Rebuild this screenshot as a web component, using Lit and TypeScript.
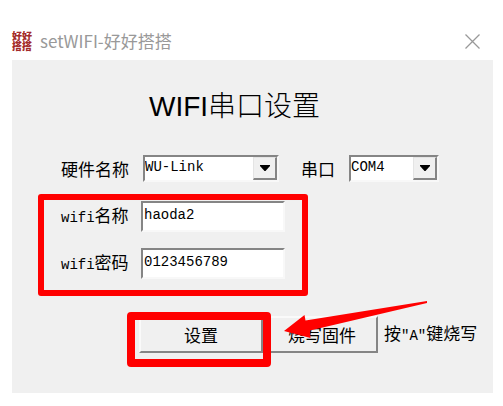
import { LitElement, html, css } from "lit";
import { customElement, property } from "lit/decorators.js";

@customElement("classic-select")
class ClassicSelect extends LitElement {
  @property({ type: Array }) options: string[] = [];
  @property() label = "";

  static styles = css`
    :host { display: block; }
    .box {
      position: relative;
      box-sizing: border-box;
      height: 27px;
      background: #fff;
      border: 2px solid;
      border-color: #858585 #f8f8f8 #f8f8f8 #858585;
    }
    .select {
      appearance: none;
      display: block;
      width: 100%;
      height: 20px;
      margin: 0;
      padding: 0 24px 0 0;
      border: 0;
      border-radius: 0;
      outline: 0;
      background: transparent;
      color: #000;
      font: 14px/20px "Liberation Mono", "Noto Sans CJK SC", monospace;
    }
    .drop {
      position: absolute;
      top: 0;
      right: 0;
      bottom: 0;
      width: 24px;
      box-sizing: border-box;
      display: grid;
      place-items: center;
      background: #f0f0f0;
      border: 1px solid #e4e4e4;
      border-right: 2px solid #858585;
      border-bottom: 2px solid #858585;
      pointer-events: none;
    }
    .tri { display: block; width: 10px; height: 6px; }
  `;

  render() {
    return html`<div class="box">
      <select class="select" aria-label=${this.label}>
        ${this.options.map((o) => html`<option>${o}</option>`)}
      </select>
      <span class="drop">
        <svg class="tri" viewBox="0 0 10 6"><path d="M0 0H10V1L5.500 6H4.500L0 1Z" /></svg>
      </span>
    </div>`;
  }
}

@customElement("app-root")
class AppRoot extends LitElement {
  static styles = css`
    :host {
      display: block;
      background: #fff;
      color: #000;
      font: 17px/20px "Noto Sans CJK SC", sans-serif;
      padding: 22px 10px 13px 12px;
    }
    .titlebar {
      display: flex;
      align-items: center;
      height: 38px;
      gap: 8px;
      color: #999;
    }
    .logo {
      width: 20px;
      word-break: break-all;
      font-size: 10px;
      line-height: 10px;
      font-weight: 900;
      color: #a32a2a;
    }
    .caption { flex: 1; font-family: "Noto Sans CJK SC", sans-serif; }
    .close {
      display: grid;
      place-items: center;
      width: 23px;
      height: 23px;
      margin-right: 9px;
      padding: 0;
      border: 0;
      background: none;
    }
    .cross { display: block; width: 15px; height: 15px; fill: none; stroke: #999; stroke-width: 1.3; }
    .panel { background: #f0f0f0; padding: 31px 0 40px; }
    .heading {
      margin: 0 0 32px 137px;
      font: 400 28px/32px "Liberation Sans", "Noto Sans CJK SC", sans-serif;
    }
    .thin { font-weight: 300; }
    .mono { font: 14px/20px "Liberation Mono", monospace; }
    .row { display: flex; align-items: center; }
    .devices { padding-left: 49px; gap: 14px; }
    .label { white-space: nowrap; width: 68px; }
    .port { width: 34px; margin-left: 8px; }
    .device-pick { width: 136px; }
    .port-pick { width: 90px; }
    .marked {
      display: flex;
      flex-direction: column;
      gap: 16px;
      width: fit-content;
      margin: 12px 0 20px 26px;
      padding: 1px 17px 11px;
      border: 6px solid #f00;
      border-radius: 3px;
    }
    .field { gap: 12px; }
    .input {
      box-sizing: border-box;
      width: 144px;
      height: 31px;
      margin: 0;
      padding: 0 1px 4px;
      border: 2px solid;
      border-color: #858585 #f8f8f8 #f8f8f8 #858585;
      border-radius: 0;
      outline: 0;
      background: #fff;
      color: #000;
      font: 14px/20px "Liberation Mono", monospace;
    }
    .actions { position: relative; margin-left: 127px; gap: 3px; }
    .target { position: relative; }
    .button {
      box-sizing: border-box;
      width: 112px;
      height: 37px;
      padding: 0;
      border: 2px solid;
      border-color: #fafafa #858585 #858585 #fafafa;
      border-radius: 0;
      background: #f0f0f0;
      color: #000;
      font: 17px/20px "Noto Sans CJK SC", sans-serif;
      display: block;
    }
    .primary { width: 124px; }
    .frame {
      position: absolute;
      inset: -4px -8px -14px -12px;
      border: 8px solid #f00;
      border-radius: 4px;
      pointer-events: none;
    }
    .hint { margin-left: 3px; white-space: nowrap; }
    .arrow {
      position: absolute;
      left: 144px;
      top: -16px;
      width: 146px;
      height: 40px;
      fill: #f00;
      pointer-events: none;
    }
  `;

  render() {
    return html`
      <header class="titlebar">
        <span class="logo" aria-hidden="true">好好搭搭</span>
        <span class="caption">setWIFI-好好搭搭</span>
        <button class="close" aria-label="关闭">
          <svg class="cross" viewBox="0 0 15 15"><path d="M.5 .5L14.500 14.500M14.500 .5L.5 14.500" /></svg>
        </button>
      </header>
      <main class="panel">
        <h1 class="heading">WIFI<span class="thin">串口设置</span></h1>
        <div class="row devices">
          <span class="label">硬件名称</span>
          <classic-select class="device-pick" label="硬件名称" .options=${["WU-Link"]}></classic-select>
          <span class="label port">串口</span>
          <classic-select class="port-pick" label="串口" .options=${["COM4"]}></classic-select>
        </div>
        <div class="marked">
          <div class="row field">
            <label class="label" for="ssid"><span class="mono">wifi</span>名称</label>
            <input class="input" id="ssid" type="text" value="haoda2" />
          </div>
          <div class="row field">
            <label class="label" for="key"><span class="mono">wifi</span>密码</label>
            <input class="input" id="key" type="text" value="0123456789" />
          </div>
        </div>
        <div class="row actions">
          <div class="target">
            <button class="button primary">设置</button>
            <span class="frame"></span>
          </div>
          <button class="button">烧写固件</button>
          <span class="hint">按<span class="mono">"A"</span>键烧写</span>
          <svg class="arrow" viewBox="0 0 146 40">
            <path d="M1 31L21.500 15L22.500 20.500L144 1V3L27 30.500L27.500 38Z" />
          </svg>
        </div>
      </main>
    `;
  }
}
